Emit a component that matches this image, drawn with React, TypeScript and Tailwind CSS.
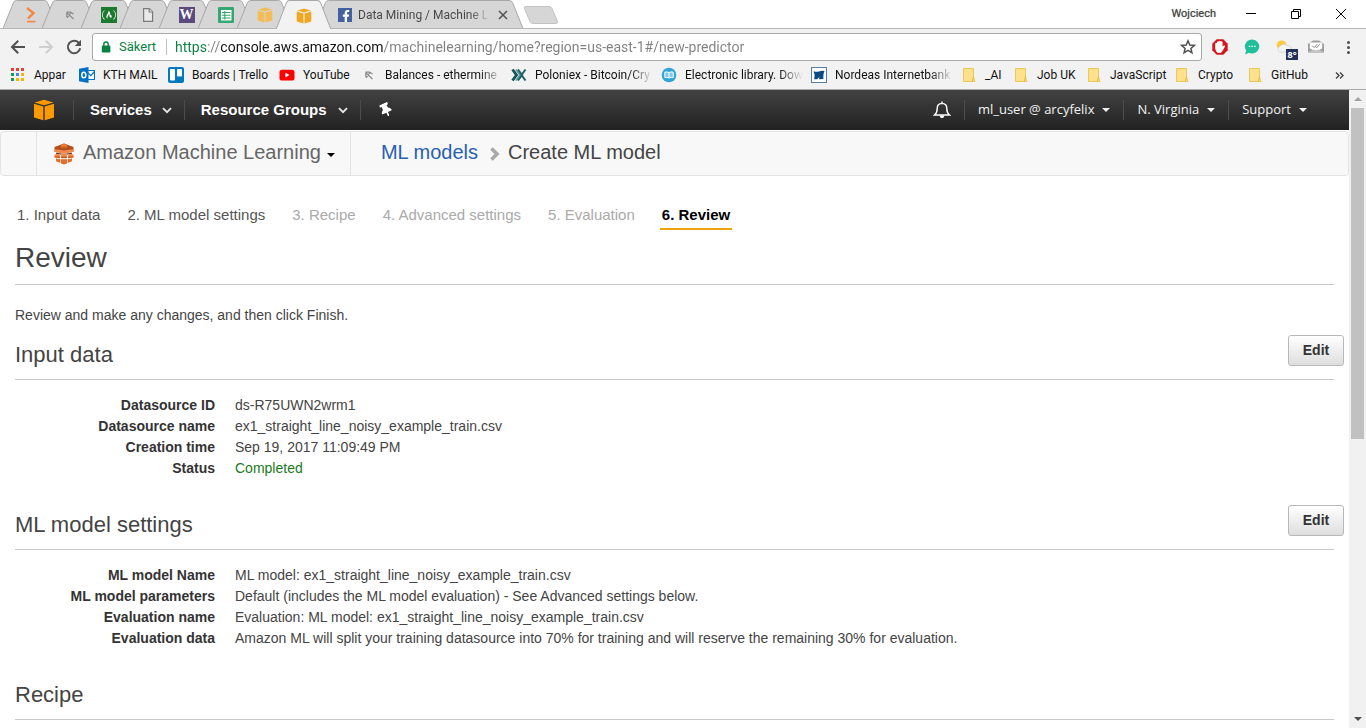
import type { ReactNode } from "react";
import { FaFacebookF, FaFreeCodeCamp, FaThumbtack } from "react-icons/fa";

const chromeFont = "font-['Roboto','Noto_Sans',sans-serif]";

/* ---------- icons ---------- */

function Cube({ className, fill }: { className: string; fill: string }) {
  return (
    <svg viewBox="0 0 22 22" className={className} fill={fill} aria-hidden="true">
      <path d="M11 0.8 20.4 3.4 11 6.2 1.6 3.4Z" />
      <path d="M1 4.8 10.3 7.6V21.2L1 18.4Z" />
      <path d="M21 4.8 11.7 7.6V21.2L21 18.4Z" />
    </svg>
  );
}

function PickIcon() {
  return (
    <svg viewBox="0 0 16 16" className="size-4" fill="none" stroke="#8a8a8a" strokeWidth="1.2" aria-hidden="true">
      <path d="M4.5 5.2H8.5L11.5 7M4.8 5.5V10M5 6 11.5 12M9 5.5 5 11" />
    </svg>
  );
}

function PageIcon() {
  return (
    <svg viewBox="0 0 16 16" className="size-4" fill="#e8e8e8" stroke="#7a7a7a" strokeWidth="1.2" aria-hidden="true">
      <path d="M3.6 1.6H9.4L12.6 4.8V14.4H3.6Z" />
      <path d="M9.2 1.6V5H12.6" />
    </svg>
  );
}

function SheetsIcon() {
  return (
    <svg viewBox="0 0 16 16" className="size-4" aria-hidden="true">
      <rect width="16" height="16" rx="1" fill="#35a870" />
      <rect x="3" y="3" width="10.5" height="10.5" fill="#fff" />
      <path d="M4 5.5H12.5M4 8.2H12.5M4 11H12.5M6.8 4V12.5" stroke="#35a870" strokeWidth="1.1" />
    </svg>
  );
}

function PromptIcon() {
  return (
    <svg viewBox="0 0 16 16" className="size-4" fill="none" stroke="#f5853f" strokeWidth="2.4" aria-hidden="true">
      <path d="M4 1 10.5 6 5 11.5" />
      <path d="M4 14.6H12.5" strokeWidth="1.6" />
    </svg>
  );
}

function AppsIcon() {
  const colors = ["#db4437", "#db4437", "#db4437", "#0f9d58", "#4285f4", "#f4b400", "#0f9d58", "#f4b400", "#f4b400"];
  return (
    <svg viewBox="0 0 16 16" className="size-4" aria-hidden="true">
      {colors.map((c, i) => (
        <rect key={i} x={1 + (i % 3) * 5} y={1 + Math.floor(i / 3) * 5} width="3" height="3" fill={c} />
      ))}
    </svg>
  );
}

function OutlookIcon() {
  return (
    <svg viewBox="0 0 16 16" className="size-4" aria-hidden="true">
      <rect x="8" y="3.5" width="7.5" height="9" fill="#fff" stroke="#0072c6" />
      <path d="M8 5 11.8 8.6 15.5 4.5" fill="none" stroke="#0072c6" strokeWidth="1.2" />
      <path d="M0 1.8 9.5 0V16L0 14.2Z" fill="#0072c6" />
      <ellipse cx="4.8" cy="8" rx="2" ry="2.8" fill="none" stroke="#fff" strokeWidth="1.5" />
    </svg>
  );
}

function TrelloIcon() {
  return (
    <svg viewBox="0 0 16 16" className="size-4" aria-hidden="true">
      <rect width="16" height="16" rx="2" fill="#0079bf" />
      <rect x="2" y="2" width="5" height="11.5" rx="1" fill="#fff" />
      <rect x="9" y="2" width="5" height="7.5" rx="1" fill="#fff" />
    </svg>
  );
}

function YouTubeIcon() {
  return (
    <svg viewBox="0 0 16 16" className="size-4" aria-hidden="true">
      <rect x="0.5" y="2.7" width="15" height="10.8" rx="2.6" fill="#f00" />
      <path d="M6.4 5.8 10.6 8.1 6.4 10.4Z" fill="#fff" />
    </svg>
  );
}

function PoloniexIcon() {
  return (
    <svg viewBox="0 0 16 16" className="size-4" fill="none" aria-hidden="true">
      <path d="M1.5 2.5 5.5 8 1.5 13.5" stroke="#17525a" strokeWidth="2.8" />
      <path d="M5 2.5 9 8 5 13.5" stroke="#5aa1a0" strokeWidth="1.8" />
      <path d="M14.5 2.5 10.5 8 14.5 13.5M7 2.5 11 8 7 13.5" stroke="#1e6068" strokeWidth="2" />
    </svg>
  );
}

function LibraryIcon() {
  return (
    <svg viewBox="0 0 16 16" className="size-4" aria-hidden="true">
      <circle cx="8" cy="8" r="7.3" fill="#31a6d6" />
      <path d="M3.8 5.2Q6 4.4 8 5.6 10 4.4 12.2 5.2V10.6Q10 9.8 8 11 6 9.8 3.8 10.6ZM8 5.6V11" fill="#7ccbe8" stroke="#fff" />
    </svg>
  );
}

function NordeaIcon() {
  return (
    <svg viewBox="0 0 16 16" className="size-4" aria-hidden="true">
      <rect x="0.5" y="0.5" width="15" height="15" fill="#fff" stroke="#5a7f9d" />
      <path d="M2.5 4.2Q5.5 5.4 8 4.4 10.5 3.4 13.6 4 12 6.4 12.4 12L8 12.2 8.4 10 6 12.2H3.2Q4.6 8 2.5 4.2Z" fill="#0b4a84" />
    </svg>
  );
}

function FolderIcon() {
  return (
    <svg viewBox="0 0 16 16" className="size-4" aria-hidden="true">
      <path d="M2.5 1.5H12.5V10L14 14.5H2.5Z" fill="#fde28b" stroke="#ecc759" />
      <path d="M12.5 9.5 11.4 14.5" stroke="#e3b341" />
    </svg>
  );
}

function MlIcon() {
  return (
    <svg viewBox="0 0 20 22" className="h-[22px] w-5" aria-hidden="true">
      <path d="M0.5 4 10 0.5 19.5 4V8.4L10 10.4 0.5 8.4Z" fill="#b5501d" />
      <path d="M7 1.4 10 0.5 13 1.4V4.4H7Z" fill="#e8772f" />
      <path d="M0.5 6.2 10 7.4 19.5 6.2V8.4L10 10.4 0.5 8.4Z" fill="#f08a4b" />
      <path d="M2 9.4 10 11 18 9.4V11.4H2Z" fill="#8a3a15" />
      <path d="M0.5 11.2H6V14.8L0.5 14.2ZM7 11.2H13V15H7ZM19.5 11.2H14V14.8L19.5 14.2Z" fill="#f08a4b" />
      <path d="M0.5 13.2 6 13.6V15.2L0.5 14.4ZM7 13.6H13V15.2H7ZM19.5 13.2 14 13.6V15.2L19.5 14.4Z" fill="#c95f22" />
      <path d="M2 15.6 6.4 16.2V20L2 18.2ZM7 16.2H13V20.6L10 21.6 7 20.6ZM18 15.6 13.6 16.2V20L18 18.2Z" fill="#e0702b" />
    </svg>
  );
}

function Caret({ className }: { className: string }) {
  return (
    <svg viewBox="0 0 8 4" className={className} fill="currentColor" aria-hidden="true">
      <path d="M0 0H8L4 4Z" />
    </svg>
  );
}

function Chevron() {
  return (
    <svg viewBox="0 0 10 7" className="h-[7px] w-[10px]" fill="none" stroke="#e8e8e8" strokeWidth="1.8" aria-hidden="true">
      <path d="M1 1.2 5 5.2 9 1.2" />
    </svg>
  );
}

/* ---------- browser tabs ---------- */

function TabShape({ width, active }: { width: number; active?: boolean }) {
  const w = width;
  return (
    <svg className="absolute inset-0 size-full" viewBox={`0 0 ${w} 28`} preserveAspectRatio="none" aria-hidden="true">
      <path
        d={`M0 28.5 L10.5 2.5 Q11.5 0.5 13.5 0.5 H${w - 13.5} Q${w - 11.5} 0.5 ${w - 10.5} 2.5 L${w} 28.5`}
        fill={active ? "#f2f2f2" : "#d6d6d6"}
        stroke="#a8a8a8"
      />
    </svg>
  );
}

const pinned: { label: string; icon: ReactNode; active?: boolean }[] = [
  { label: "Terminal", icon: <PromptIcon /> },
  { label: "Ethermine", icon: <PickIcon /> },
  {
    label: "freeCodeCamp",
    icon: (
      <span className="flex size-4 items-center justify-center bg-[#1c7a30] text-white">
        <FaFreeCodeCamp className="size-3.5" />
      </span>
    ),
  },
  { label: "Document", icon: <PageIcon /> },
  {
    label: "Wiki",
    icon: (
      <span className="flex size-4 items-center justify-center bg-[#5a4a7d] font-['Liberation_Serif',serif] text-sm font-bold text-white">
        W
      </span>
    ),
  },
  { label: "Sheets", icon: <SheetsIcon /> },
  { label: "AWS", icon: <Cube className="size-4" fill="#f3bc55" /> },
  { label: "AWS Console", icon: <Cube className="size-4" fill="#efa724" />, active: true },
];

function TabStrip() {
  return (
    <div className={`relative flex h-7 shrink-0 items-stretch bg-white pl-[3px] ${chromeFont}`}>
      {pinned.map((t) => (
        <button
          key={t.label}
          aria-label={t.label}
          className={`relative -mr-4 flex w-[55px] items-center justify-center pt-0.5 ${t.active ? "z-10 -mb-px" : ""}`}
        >
          <TabShape width={55} active={t.active} />
          <span className="relative">{t.icon}</span>
        </button>
      ))}
      <div className="relative flex w-[208px] items-center pt-0.5 pl-[23px]">
        <TabShape width={208} />
        <button className="relative flex items-center gap-1.5 text-xs text-[#444]">
          <span className="flex size-3.5 items-end justify-end bg-[#4460a0] text-white">
            <FaFacebookF className="size-3" />
          </span>
          <span className="w-[132px] overflow-hidden bg-linear-to-r from-[#444] from-85% to-transparent bg-clip-text text-left whitespace-nowrap text-transparent">
            Data Mining / Machine L
          </span>
        </button>
        <button aria-label="Close tab" className="relative ml-2">
          <svg viewBox="0 0 10 10" className="size-2.5" stroke="#555" strokeWidth="1.6" aria-hidden="true">
            <path d="M1 1 9 9M9 1 1 9" />
          </svg>
        </button>
      </div>
      <button aria-label="New tab" className="flex items-center pt-0.5">
        <svg viewBox="0 0 36 18" className="h-[18px] w-9" fill="#d6d6d6" stroke="#c2c2c2" aria-hidden="true">
          <path d="M2.5 0.5H26Q28 0.5 29 2.5L34.5 15.5Q35 17.5 33 17.5H10Q8 17.5 7 15.5L1.5 2.5Q1 0.5 2.5 0.5Z" />
        </svg>
      </button>
      <div className="ml-auto flex items-center">
        <span className="mr-[30px] text-[11px] text-[#444] text-shadow-[0_0_1px_#888]">Wojciech</span>
        <div className="flex items-center gap-[35px] pr-5">
          <button aria-label="Minimize">
            <svg viewBox="0 0 10 10" className="size-2.5" stroke="#000" aria-hidden="true">
              <path d="M0 4.5H10" />
            </svg>
          </button>
          <button aria-label="Restore">
            <svg viewBox="0 0 10 10" className="size-2.5" fill="none" stroke="#000" aria-hidden="true">
              <path d="M0.5 2.5H7.5V9.5H0.5ZM2.5 2.5V0.5H9.5V7.5H7.5" />
            </svg>
          </button>
          <button aria-label="Close">
            <svg viewBox="0 0 10 10" className="size-2.5" stroke="#000" aria-hidden="true">
              <path d="M0 0 10 10M10 0 0 10" />
            </svg>
          </button>
        </div>
      </div>
    </div>
  );
}

/* ---------- address bar ---------- */

function Toolbar() {
  return (
    <div className={`flex h-[37px] shrink-0 items-center border-t border-[#b6b6b6] bg-[#f2f2f2] pr-2.5 pl-2.5 ${chromeFont}`}>
      <div className="flex items-center gap-3">
        <button aria-label="Back">
          <svg viewBox="0 0 16 16" className="size-4" fill="none" stroke="#505050" strokeWidth="2" aria-hidden="true">
            <path d="M15 8H2.5M8.2 1.8 2 8 8.2 14.2" />
          </svg>
        </button>
        <button aria-label="Forward">
          <svg viewBox="0 0 16 16" className="size-4" fill="none" stroke="#cfcfcf" strokeWidth="2" aria-hidden="true">
            <path d="M1 8H13.5M7.8 1.8 14 8 7.8 14.2" />
          </svg>
        </button>
        <button aria-label="Reload">
          <svg viewBox="0 0 16 16" className="size-4" fill="none" stroke="#505050" strokeWidth="2" aria-hidden="true">
            <path d="M13.2 4.4A6.2 6.2 0 1 0 14.2 9.2" />
            <path d="M15 0.8V7H8.8Z" fill="#505050" stroke="none" />
          </svg>
        </button>
      </div>
      <div className="ml-2.5 flex h-7 flex-1 items-center rounded-[3px] border border-[#a9a9a9] bg-white pr-[5px] pl-2">
        <svg viewBox="0 0 10 12" className="h-3 w-2.5" aria-hidden="true">
          <rect x="0.8" y="4.6" width="8.6" height="7" rx="0.8" fill="#0b8043" />
          <path d="M2.8 5V3.2A2.2 2.2 0 0 1 7.2 3.2V5" fill="none" stroke="#0b8043" strokeWidth="1.4" />
        </svg>
        <span className="ml-2 w-12 border-r border-[#bdbdbd] text-[13px] leading-4 text-[#0b8043]">Säkert</span>
        <input
          aria-label="Address"
          defaultValue="https://console.aws.amazon.com/machinelearning/home?region=us-east-1#/new-predictor"
          className="ml-2 min-w-0 flex-1 bg-[linear-gradient(to_right,#0b8043_32px,#808080_32px,#808080_46px,#111_46px,#111_208px,#808080_208px)] bg-clip-text text-sm text-transparent outline-none"
        />
        <button aria-label="Bookmark this page">
          <svg viewBox="0 0 16 16" className="size-4" fill="none" stroke="#505050" strokeWidth="1.5" aria-hidden="true">
            <path d="M8 1.8 9.8 6 14.3 6.4 10.9 9.4 11.9 13.8 8 11.4 4.1 13.8 5.1 9.4 1.7 6.4 6.2 6Z" />
          </svg>
        </button>
      </div>
      <div className="ml-2.5 flex items-center gap-4">
        <button aria-label="AdBlock">
          <svg viewBox="0 0 16 16" className="size-4" aria-hidden="true">
            <path d="M4.7 0.3H11.3L15.7 4.7V11.3L11.3 15.7H4.7L0.3 11.3V4.7Z" fill="#d8141c" />
            <path
              d="M3.2 6.5V4.4Q4 3.4 5 4.2V3Q5.9 1.8 6.9 2.6 7.8 1.2 8.9 2.4 9.9 1.8 10.6 3V7.6L11.8 6.6Q13.2 6.2 13 7.4L10.6 11.8 8.8 14H5.8Q3.4 12 3.2 9.6Z"
              fill="#fff"
            />
          </svg>
        </button>
        <button aria-label="Chat">
          <svg viewBox="0 0 16 16" className="size-4" aria-hidden="true">
            <path d="M8.2 0.4A7.3 7 0 1 1 5 13.8L1.2 15.4 2.2 11.4A7.3 7 0 0 1 8.2 0.4Z" fill="#1fbf9c" />
            <path d="M4.8 7.4H6.2M7.5 7.4H8.9M10.2 7.4H11.6" stroke="#fff" strokeWidth="1.4" />
          </svg>
        </button>
        <button aria-label="Weather 8°" className="relative">
          <svg viewBox="0 0 16 16" className="size-4" aria-hidden="true">
            <circle cx="5.6" cy="6.2" r="4.8" fill="#fbcb3a" />
            <path d="M3.6 13A3 3 0 0 1 4 7.4 4 3.6 0 0 1 11 6.8 3.2 3.2 0 0 1 13 13Z" fill="#f4f4f4" stroke="#cfcfcf" strokeWidth="0.8" />
          </svg>
          <span className="absolute top-2.5 left-2.5 flex h-[11px] w-3 items-center justify-center bg-[#23325c] font-['Open_Sans',sans-serif] text-[9px] font-bold text-white">
            8°
          </span>
        </button>
        <button aria-label="Mail">
          <svg viewBox="0 0 16 16" className="size-4" aria-hidden="true">
            <path d="M0 5 5 1.4H11L16 5V14H0Z" fill="#9c9c9c" />
            <path d="M1.8 3.4H14.2V9.4L8 12.4 1.8 9.4Z" fill="#fff" />
            <path d="M0 14V13L6 10.6 8 11.6 10 10.6 16 13V14Z" fill="#c2c2c2" />
            <path d="M4.2 6.6 6.2 8.6 9.2 5.2M7.8 8 8.6 8.8 11.8 5.2" fill="none" stroke="#888" />
          </svg>
        </button>
        <button aria-label="Menu" className="flex w-4 flex-col items-center gap-0.5">
          <span className="size-[3px] rounded-full bg-[#505050]" />
          <span className="size-[3px] rounded-full bg-[#505050]" />
          <span className="size-[3px] rounded-full bg-[#505050]" />
        </button>
      </div>
    </div>
  );
}

/* ---------- bookmarks ---------- */

const bookmarks: { label: string; width: string; icon: ReactNode; fade?: boolean }[] = [
  { label: "Appar", width: "w-[69px]", icon: <AppsIcon /> },
  { label: "KTH MAIL", width: "w-[89px]", icon: <OutlookIcon /> },
  { label: "Boards | Trello", width: "w-[111px]", icon: <TrelloIcon /> },
  { label: "YouTube", width: "w-[82px]", icon: <YouTubeIcon /> },
  { label: "Balances - ethermine", width: "w-[150px]", icon: <PickIcon />, fade: true },
  { label: "Poloniex - Bitcoin/Cry", width: "w-[150px]", icon: <PoloniexIcon />, fade: true },
  { label: "Electronic library. Dow", width: "w-[150px]", icon: <LibraryIcon />, fade: true },
  { label: "Nordeas Internetbank", width: "w-[150px]", icon: <NordeaIcon />, fade: true },
  { label: "_AI", width: "w-[52px]", icon: <FolderIcon /> },
  { label: "Job UK", width: "w-[73px]", icon: <FolderIcon /> },
  { label: "JavaScript", width: "w-[88px]", icon: <FolderIcon /> },
  { label: "Crypto", width: "w-[73px]", icon: <FolderIcon /> },
  { label: "GitHub", width: "w-[73px]", icon: <FolderIcon /> },
];

function Bookmarks() {
  return (
    <div className={`flex h-[25px] shrink-0 items-center border-b border-[#a9a9a9] bg-[#f2f2f2] pr-[22px] pb-1 pl-2.5 text-xs text-[#111] ${chromeFont}`}>
      {bookmarks.map((b) => (
        <a key={b.label} href="#" className={`flex shrink-0 items-center gap-2 ${b.width}`}>
          {b.icon}
          <span
            className={
              b.fade
                ? "w-[118px] overflow-hidden bg-linear-to-r from-[#111] from-80% to-transparent bg-clip-text whitespace-nowrap text-transparent"
                : "whitespace-nowrap"
            }
          >
            {b.label}
          </span>
        </a>
      ))}
      <button aria-label="More bookmarks" className="ml-auto">
        <svg viewBox="0 0 9 7" className="h-[7px] w-[9px]" fill="none" stroke="#444" strokeWidth="1.4" aria-hidden="true">
          <path d="M1 0.5 4 3.5 1 6.5M5 0.5 8 3.5 5 6.5" />
        </svg>
      </button>
    </div>
  );
}

/* ---------- AWS console ---------- */

function Divider() {
  return <span className="h-5 w-px bg-[#4c4c4c]" />;
}

function ConsoleNav() {
  return (
    <nav className="flex h-10 shrink-0 items-center bg-linear-to-b from-[#424242] to-[#222] pr-[42px] pl-[33px] text-white">
      <a href="#" aria-label="AWS home" className="mr-[18px]">
        <Cube className="size-[22px]" fill="#f90" />
      </a>
      <Divider />
      <button className="mr-3 ml-4 flex items-center gap-2.5 text-[15px] font-bold">
        Services <Chevron />
      </button>
      <Divider />
      <button className="mr-3 ml-4 flex items-center gap-[11px] text-[15px] font-bold">
        Resource Groups <Chevron />
      </button>
      <Divider />
      <button aria-label="Pin shortcuts" className="ml-[18px]">
        <FaThumbtack className="size-3.5 -rotate-[25deg]" />
      </button>
      <div className="ml-auto flex items-center gap-[13px] font-['Open_Sans','Noto_Sans',sans-serif] text-[13px] text-[#f2f2f2]">
        <button aria-label="Notifications">
          <svg viewBox="0 0 18 18" className="size-[18px]" fill="none" stroke="#fff" strokeWidth="1.4" aria-hidden="true">
            <path d="M1.5 14Q4.2 12 4.2 7.5 4.2 2.6 9 2.4 13.8 2.6 13.8 7.5 13.8 12 16.5 14Z" />
            <path d="M9 2.4V0.6" />
            <path d="M6.6 14.6H11.4Q11 17.2 9 17.2 7 17.2 6.6 14.6Z" fill="#fff" stroke="none" />
          </svg>
        </button>
        <Divider />
        <button className="flex items-center gap-2 pb-px">
          ml_user @ arcyfelix <Caret className="h-1 w-2" />
        </button>
        <Divider />
        <button className="flex items-center gap-2 pb-px">
          N. Virginia <Caret className="h-1 w-2" />
        </button>
        <Divider />
        <button className="flex items-center gap-2 pb-px">
          Support <Caret className="h-1 w-2" />
        </button>
      </div>
    </nav>
  );
}

function ServiceBar() {
  return (
    <div className="mt-px flex h-[45px] shrink-0 items-stretch rounded-[4px] border border-[#e3e3e3] bg-[#f8f8f8] pl-[35px] text-xl">
      <button className="flex items-center border-x border-[#e3e3e3] pr-[15px] pb-1 pl-[17px] text-[#666]">
        <span className="mr-[9px] pt-1">
          <MlIcon />
        </span>
        Amazon Machine Learning
        <Caret className="mt-1.5 ml-1.5 h-1 w-2 text-black" />
      </button>
      <div className="flex items-center pb-1 pl-[30px]">
        <a href="#" className="text-[#2860b0]">
          ML models
        </a>
        <svg viewBox="0 0 10 14" className="mt-1 mr-2 ml-3 h-3.5 w-2.5" fill="none" stroke="#a8a8a8" strokeWidth="3.6" aria-hidden="true">
          <path d="M1.5 1.5 7 7 1.5 12.5" />
        </svg>
        <span className="text-[#444]">Create ML model</span>
      </div>
    </div>
  );
}

const steps = [
  { label: "1. Input data", style: "border-transparent text-[#555]" },
  { label: "2. ML model settings", style: "border-transparent text-[#555]" },
  { label: "3. Recipe", style: "border-transparent text-[#aaa]" },
  { label: "4. Advanced settings", style: "border-transparent text-[#aaa]" },
  { label: "5. Evaluation", style: "border-transparent text-[#aaa]" },
  { label: "6. Review", style: "border-[#eba40d] font-bold text-black" },
];

type Row = { term: string; value: string; style?: string };

function Section({ title, rows }: { title: string; rows: Row[] }) {
  return (
    <section className="mb-[26px]">
      <div className="flex h-[31px] items-end justify-between">
        <h2 className="text-[22px] leading-[23px] text-[#444]">{title}</h2>
        {rows.length > 0 && (
          <button
            aria-label={`Edit ${title}`}
            className="h-[31px] w-14 rounded-[3px] border border-[#b8b8b8] bg-linear-to-b from-white to-[#dedede] pb-0.5 text-sm font-bold text-[#333]"
          >
            Edit
          </button>
        )}
      </div>
      <hr className="mt-[13px] mr-2.5 border-[#c8c8c8]" />
      <dl className="mt-[15px] grid grid-cols-[200px_1fr] gap-x-5 text-sm leading-[21px] text-[#444]">
        {rows.map((r) => (
          <div key={r.term} className="contents">
            <dt className="text-right font-bold text-[#333]">{r.term}</dt>
            <dd className={r.style}>{r.value}</dd>
          </div>
        ))}
      </dl>
    </section>
  );
}

const inputData: Row[] = [
  { term: "Datasource ID", value: "ds-R75UWN2wrm1" },
  { term: "Datasource name", value: "ex1_straight_line_noisy_example_train.csv" },
  { term: "Creation time", value: "Sep 19, 2017 11:09:49 PM" },
  { term: "Status", value: "Completed", style: "text-[#1a7a1a]" },
];

const modelSettings: Row[] = [
  { term: "ML model Name", value: "ML model: ex1_straight_line_noisy_example_train.csv" },
  { term: "ML model parameters", value: "Default (includes the ML model evaluation) - See Advanced settings below." },
  { term: "Evaluation name", value: "Evaluation: ML model: ex1_straight_line_noisy_example_train.csv" },
  {
    term: "Evaluation data",
    value:
      "Amazon ML will split your training datasource into 70% for training and will reserve the remaining 30% for evaluation.",
  },
];

function Review() {
  return (
    <main className="pr-[5px] pl-[15px]">
      <ol className="flex h-[54px] items-end gap-[23px] text-[15px] leading-[27px]">
        {steps.map((s) => (
          <li key={s.label} className={`border-b-2 px-0.5 ${s.style}`}>
            {s.label}
          </li>
        ))}
      </ol>
      <h1 className="mt-3 text-[28px] leading-8 text-[#444]">Review</h1>
      <hr className="mt-2.5 mr-2.5 border-[#c8c8c8]" />
      <p className="mt-5 mb-[9px] text-sm leading-[21px] text-[#444]">
        Review and make any changes, and then click Finish.
      </p>
      <Section title="Input data" rows={inputData} />
      <Section title="ML model settings" rows={modelSettings} />
      <Section title="Recipe" rows={[]} />
    </main>
  );
}

function Scrollbar() {
  return (
    <div className="flex w-[17px] shrink-0 flex-col items-center bg-[#f1f1f1]" aria-hidden="true">
      <Caret className="my-[7px] h-1 w-2 shrink-0 rotate-180 text-[#a3a3a3]" />
      <div className="flex w-full flex-1 flex-col px-0.5">
        <div className="h-[55%] bg-[#c1c1c1]" />
      </div>
      <Caret className="my-[7px] h-1 w-2 shrink-0 text-[#505050]" />
    </div>
  );
}

export default function App() {
  return (
    <div className="flex h-screen flex-col overflow-hidden bg-white font-['Liberation_Sans',Arial,sans-serif]">
      <TabStrip />
      <Toolbar />
      <Bookmarks />
      <div className="flex min-h-0 flex-1">
        <div className="min-w-0 flex-1 overflow-hidden">
          <ConsoleNav />
          <ServiceBar />
          <Review />
        </div>
        <Scrollbar />
      </div>
    </div>
  );
}
